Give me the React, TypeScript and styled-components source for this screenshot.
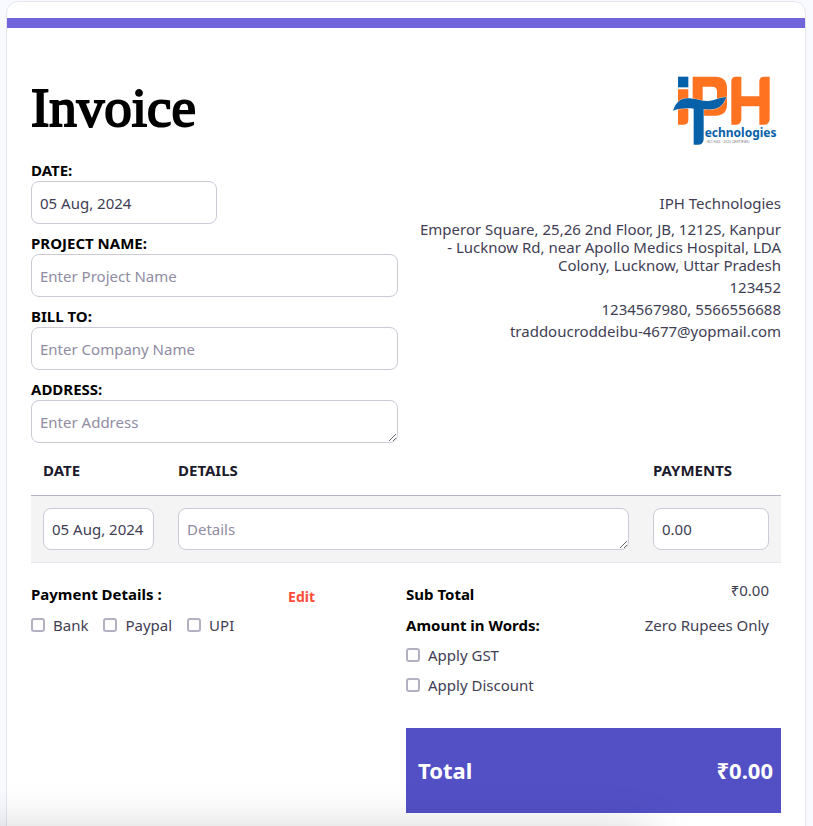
import React from "react";
import styled, { createGlobalStyle } from "styled-components";

const GlobalStyle = createGlobalStyle`
  *, *::before, *::after { box-sizing: border-box; }
  html { background: #f9faff; }
  body {
    margin: 0;
    overflow: hidden;
    color: #413e54;
    font-family: "Noto Sans", sans-serif;
    font-size: 15px;
    line-height: 18px;
  }
  button, input, textarea { font: inherit; color: inherit; }
`;

const Card = styled.main`
  margin: 1px 7px 0 6px;
  padding: 16px 0 48px;
  background: #fff;
  border: 1px solid #e6e6f1;
  border-radius: 12px;
`;

const AccentBar = styled.div`
  height: 10px;
  background: #7065db;
`;

const Content = styled.form`
  padding: 48px 24px 0;
`;

const Split = styled.div`
  display: grid;
  grid-template-columns: 1fr 1fr;
`;

const Header = styled.header`
  display: flex;
  justify-content: space-between;
  align-items: flex-start;
  height: 85px;
`;

const Title = styled.h1`
  margin: 0;
  color: #000;
  font: 400 55px/64px "Liberation Serif", serif;
  -webkit-text-stroke: 2px #000;
`;

const Logo = styled.svg`
  width: 104px;
  height: 70px;
  margin-right: 4px;
`;

const Fields = styled.div`
  display: flex;
  flex-direction: column;
  gap: 10px;
  padding-right: 8px;
`;

const Field = styled.div`
  display: flex;
  flex-direction: column;
`;

const FieldLabel = styled.label`
  padding-bottom: 2px;
  color: #000;
  font-weight: 700;
`;

const TextInput = styled.input<{ $short?: boolean }>`
  width: ${(p) => (p.$short ? "186px" : "100%")};
  height: 43px;
  padding: 0 8px;
  background: #fff;
  border: 1px solid #cccad6;
  border-radius: 8px;
  outline: none;
  &::placeholder { color: #8f8ca3; opacity: 1; }
`;

const TextArea = styled.textarea`
  display: block;
  width: 100%;
  height: 43px;
  padding: 12px 8px;
  background: #fff;
  border: 1px solid #cccad6;
  border-radius: 8px;
  outline: none;
  overflow: hidden;
  resize: vertical;
  &::placeholder { color: #8f8ca3; opacity: 1; }
`;

const Company = styled.address`
  display: flex;
  flex-direction: column;
  gap: 4px;
  padding: 33px 0 0 8px;
  font-style: normal;
  text-align: right;
`;

const CompanyName = styled.span`
  padding-bottom: 4px;
`;

const Items = styled.table`
  width: 100%;
  margin-top: 5px;
  border-collapse: collapse;
  table-layout: fixed;
`;

const HeadCell = styled.th<{ $width?: string }>`
  width: ${(p) => p.$width ?? "auto"};
  height: 47px;
  padding: 0 12px 2px;
  border-bottom: 1px solid #b6b4c6;
  color: #1c1a2b;
  font-weight: 700;
  text-align: left;
`;

const Cell = styled.td`
  padding: 12px;
  background: #f4f4f4;
  border-bottom: 1px solid #e6e6f1;
  ${TextInput}, ${TextArea} { height: 42px; }
  ${TextArea} { padding: 11px 8px; }
`;

const Summary = styled(Split)`
  padding-top: 18px;
`;

const Column = styled.section`
  display: flex;
  flex-direction: column;
`;

const PaymentHead = styled.div`
  display: flex;
  align-items: center;
  justify-content: space-between;
  height: 26px;
  padding-right: 91px;
`;

const Strong = styled.strong`
  color: #000;
  font-weight: 700;
`;

const EditButton = styled.button`
  padding: 6px 0 0;
  background: none;
  border: 0;
  color: #ff4c38;
  font-size: 14px;
  font-weight: 700;
  cursor: pointer;
`;

const Checks = styled.div<{ $stacked?: boolean }>`
  display: flex;
  flex-direction: ${(p) => (p.$stacked ? "column" : "row")};
  gap: ${(p) => (p.$stacked ? "12px" : "15px")};
  padding-top: 9px;
`;

const Check = styled.label`
  display: flex;
  align-items: center;
  gap: 8px;
`;

const Box = styled.input`
  appearance: none;
  width: 14px;
  height: 14px;
  margin: 0;
  background: #fff;
  border: 2px solid #b3b0c2;
  border-radius: 3px;
  &:checked { background: #5350c6; border-color: #5350c6; }
`;

const AmountRow = styled.div<{ $first?: boolean }>`
  display: flex;
  justify-content: space-between;
  align-items: ${(p) => (p.$first ? "flex-start" : "center")};
  height: ${(p) => (p.$first ? "32px" : "24px")};
  padding-right: 12px;
  ${Strong} { padding-top: ${(p) => (p.$first ? "4px" : "0")}; }
`;

const TotalBar = styled.div`
  display: flex;
  align-items: center;
  justify-content: space-between;
  height: 85px;
  margin-top: 34px;
  padding: 0 8px 0 12px;
  background: #5350c6;
  color: #fff;
  font-size: 22px;
  font-weight: 700;
  line-height: 32px;
`;

const BottomShade = styled.div`
  position: fixed;
  top: 100%;
  left: -80px;
  right: 20%;
  height: 60px;
  margin-top: 6px;
  box-shadow: 0 0 48px rgba(0, 0, 0, 0.2);
  pointer-events: none;
`;

function IphLogo() {
  return (
    <Logo viewBox="38 34 312 210" role="img" aria-label="IPH Technologies">
      <g fill="#ff721f">
        <path d="M53 74h31v92q0 14-14 14H53z" />
        <path d="M97 36h68q35 0 35 35v48q0 34-34 34h-36v-28h26q14 0 14-14V80q0-14-14-14h-29v46H97z" />
        <path d="M213 50q0-14 14-14h16v59h54V50q0-14 14-14h17v126q0 18-18 18h-13v-55h-54v37q0 18-18 18h-12z" />
      </g>
      <g fill="#0761a9">
        <rect x="53" y="36" width="31" height="32" />
        <path
          d="M38 138C46 116 58 101 80 101C112 101 128 115 160 106Q180 99 198 97C190 121 176 132 154 134Q142 135 130 133V222Q130 240 112 240H100V132C80 130 56 131 38 138Z"
          stroke="#fff"
          strokeWidth="2"
          paintOrder="stroke"
        />
      </g>
      <text x="133" y="218" fill="#0761a9" fontFamily="Noto Sans, sans-serif" fontSize="36" fontWeight="700">
        echnologies
      </text>
      <text x="139" y="234" fill="#77777c" fontFamily="Liberation Sans, sans-serif" fontSize="10">
        ISO 9001 : 2015 CERTIFIED
      </text>
    </Logo>
  );
}

function CheckItem({ label }: { label: string }) {
  return (
    <Check>
      <Box type="checkbox" />
      {label}
    </Check>
  );
}

export default function App() {
  return (
    <>
      <GlobalStyle />
      <Card>
        <AccentBar />
        <Content onSubmit={(e) => e.preventDefault()}>
          <Header>
            <Title>Invoice</Title>
            <IphLogo />
          </Header>
          <Split>
            <Fields>
              <Field>
                <FieldLabel htmlFor="date">DATE:</FieldLabel>
                <TextInput id="date" $short defaultValue="05 Aug, 2024" />
              </Field>
              <Field>
                <FieldLabel htmlFor="project">PROJECT NAME:</FieldLabel>
                <TextInput id="project" placeholder="Enter Project Name" />
              </Field>
              <Field>
                <FieldLabel htmlFor="bill">BILL TO:</FieldLabel>
                <TextInput id="bill" placeholder="Enter Company Name" />
              </Field>
              <Field>
                <FieldLabel htmlFor="address">ADDRESS:</FieldLabel>
                <TextArea id="address" rows={1} placeholder="Enter Address" />
              </Field>
            </Fields>
            <Company>
              <CompanyName>IPH Technologies</CompanyName>
              <span>
                Emperor Square, 25,26 2nd Floor, JB, 1212S, Kanpur - Lucknow Rd, near Apollo Medics
                Hospital, LDA Colony, Lucknow, Uttar Pradesh
              </span>
              <span>123452</span>
              <span>1234567980, 5566556688</span>
              <span>traddoucroddeibu-4677@yopmail.com</span>
            </Company>
          </Split>
          <Items>
            <thead>
              <tr>
                <HeadCell $width="18%">DATE</HeadCell>
                <HeadCell>DETAILS</HeadCell>
                <HeadCell $width="140px">PAYMENTS</HeadCell>
              </tr>
            </thead>
            <tbody>
              <tr>
                <Cell>
                  <TextInput aria-label="Item date" defaultValue="05 Aug, 2024" />
                </Cell>
                <Cell>
                  <TextArea aria-label="Item details" rows={1} placeholder="Details" />
                </Cell>
                <Cell>
                  <TextInput aria-label="Item payment" defaultValue="0.00" />
                </Cell>
              </tr>
            </tbody>
          </Items>
          <Summary>
            <Column>
              <PaymentHead>
                <Strong>Payment Details :</Strong>
                <EditButton type="button">Edit</EditButton>
              </PaymentHead>
              <Checks>
                <CheckItem label="Bank" />
                <CheckItem label="Paypal" />
                <CheckItem label="UPI" />
              </Checks>
            </Column>
            <Column>
              <AmountRow $first>
                <Strong>Sub Total</Strong>
                <span>₹0.00</span>
              </AmountRow>
              <AmountRow>
                <Strong>Amount in Words:</Strong>
                <span>Zero Rupees Only</span>
              </AmountRow>
              <Checks $stacked>
                <CheckItem label="Apply GST" />
                <CheckItem label="Apply Discount" />
              </Checks>
              <TotalBar>
                <span>Total</span>
                <span>₹0.00</span>
              </TotalBar>
            </Column>
          </Summary>
        </Content>
      </Card>
      <BottomShade />
    </>
  );
}
